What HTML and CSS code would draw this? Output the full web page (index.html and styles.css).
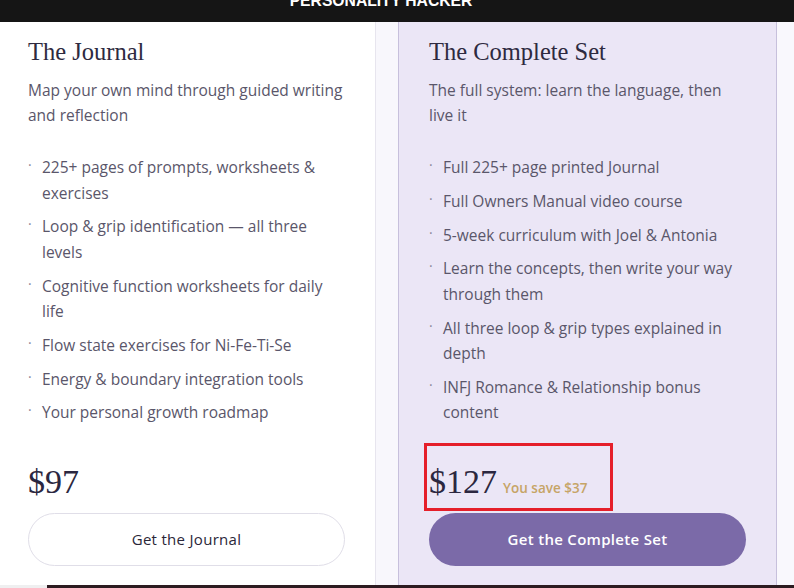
FILE: index.html
```html
<!DOCTYPE html>
<html>
<head>
<meta charset="utf-8">
<link rel="stylesheet" href="styles.css">
</head>
<body>
<header class="topbar"><div class="brand">PERSONALITY HACKER</div></header>
<main class="plans">
  <section class="card card-journal">
    <h2 class="title">The Journal</h2>
    <p class="desc">Map your own mind through guided writing and reflection</p>
    <ul class="features">
      <li>225+ pages of prompts, worksheets &amp; exercises</li>
      <li>Loop &amp; grip identification — all three levels</li>
      <li>Cognitive function worksheets for daily life</li>
      <li>Flow state exercises for Ni-Fe-Ti-Se</li>
      <li>Energy &amp; boundary integration tools</li>
      <li>Your personal growth roadmap</li>
    </ul>
    <div class="price-row"><span class="price">$97</span></div>
    <a class="btn btn-outline">Get the Journal</a>
  </section>
  <div class="spacer"></div>
  <section class="card card-set">
    <h2 class="title">The Complete Set</h2>
    <p class="desc">The full system: learn the language, then live it</p>
    <ul class="features">
      <li>Full 225+ page printed Journal</li>
      <li>Full Owners Manual video course</li>
      <li>5-week curriculum with Joel &amp; Antonia</li>
      <li>Learn the concepts, then write your way through them</li>
      <li>All three loop &amp; grip types explained in depth</li>
      <li>INFJ Romance &amp; Relationship bonus content</li>
    </ul>
    <div class="price-row"><span class="price">$127</span><span class="save">You save $37</span><span class="highlight"></span></div>
    <a class="btn btn-solid">Get the Complete Set</a>
  </section>
  <div class="rest"></div>
</main>
<footer class="strip"><div class="strip-dark"></div></footer>
</body>
</html>
```
FILE: styles.css
```css
* { box-sizing: border-box; }
html, body { margin: 0; padding: 0; }
body {
  width: 794px;
  height: 588px;
  overflow: hidden;
  background: #f8f7fc;
  font-family: "Open Sans", "DejaVu Sans", sans-serif;
}
.topbar {
  height: 22px;
  background: #151515;
  overflow: hidden;
  text-align: center;
}
.brand {
  margin-top: -7px;
  padding-right: 32px;
  font-family: "Liberation Sans", Arial, sans-serif;
  font-weight: 700;
  font-size: 15.7px;
  line-height: 15px;
  color: #ffffff;
}
.plans {
  display: flex;
  height: 563px;
}
.card {
  display: flex;
  flex-direction: column;
  padding-top: 14px;
  padding-bottom: 19px;
}
.card-journal {
  width: 376px;
  background: #ffffff;
  border-right: 1px solid #e7e5ee;
  padding-left: 28px;
  padding-right: 30px;
}
.spacer { width: 22px; background: #f8f7fc; }
.card-set {
  width: 379px;
  background: #ebe6f6;
  border-left: 1px solid #c7c0dc;
  border-right: 1px solid #c7c0dc;
  padding-left: 30px;
  padding-right: 30px;
}
.rest { flex: 1; background: #f9f8fd; }
.title {
  margin: 0;
  font-family: "Liberation Serif", "DejaVu Serif", serif;
  font-weight: 400;
  font-size: 24.5px;
  line-height: 31px;
  color: #2e2a40;
}
.desc {
  margin: 11px 0 0;
  font-size: 15.5px;
  line-height: 25px;
  color: #5a566a;
}
.features {
  list-style: none;
  margin: 27px 0 0;
  padding: 0;
}
.features li {
  position: relative;
  padding-left: 14px;
  font-size: 15.5px;
  line-height: 25.5px;
  color: #5a566a;
  margin-bottom: 8.3px;
}
.features li::before {
  content: "·";
  position: absolute;
  left: 0;
  top: -3px;
  color: #8a8698;
  font-size: 14px;
}
.price-row {
  position: relative;
  margin-top: auto;
  display: flex;
  align-items: baseline;
  gap: 6px;
}
.price {
  font-family: "Liberation Serif", "DejaVu Serif", serif;
  font-size: 34px;
  line-height: 46px;
  color: #2b2740;
}
.save {
  font-size: 13.5px;
  font-weight: 600;
  color: #c6a466;
}
.highlight {
  position: absolute;
  left: -5px;
  top: -16px;
  width: 189px;
  height: 68px;
  border: 3px solid #e51f2a;
}
.btn {
  display: flex;
  align-items: center;
  justify-content: center;
  height: 53px;
  margin-top: 8px;
  border-radius: 27px;
  font-size: 15px;
  letter-spacing: 0.3px;
  padding-bottom: 2px;
}
.btn-outline {
  border: 1px solid #e0dee8;
  background: #ffffff;
  color: #2a2638;
  font-weight: 500;
}
.btn-solid {
  background: #7b6aa8;
  color: #ffffff;
  font-weight: 600;
}
.strip {
  height: 3px;
  background: #efeff0;
  display: flex;
}
.strip-dark {
  margin-left: 47px;
  flex: 1;
  background: #2c1b20;
}
```
